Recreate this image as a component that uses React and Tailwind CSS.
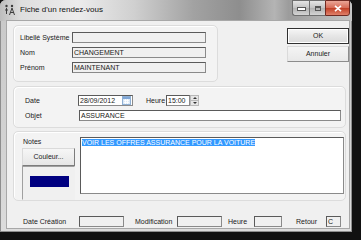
import React from "react";

function Field({ className, value, white }) {
  return (
    <div
      className={
        "h-[11px] border border-[#8a8a8a] border-t-[#5a5a5a] border-l-[#5a5a5a] px-[1px] text-[7px] leading-[9px] whitespace-nowrap overflow-hidden " +
        (white ? "bg-white " : "bg-[#f0f0f0] ") +
        className
      }
    >
      {value}
    </div>
  );
}

function Label({ className, children }) {
  return <div className={"shrink-0 text-[7px] leading-[9px] text-[#1a1a1a] " + className}>{children}</div>;
}

function CalendarIcon() {
  return (
    <svg width="9" height="9" viewBox="0 0 9 9">
      <rect x="0.5" y="0.5" width="8" height="8" fill="#dbe9f7" stroke="#8fb0d4" />
      <rect x="1" y="1" width="7" height="2" fill="#7fa6d6" />
      <path d="M2 4.5h5M2 6.5h5M3.5 3v5M5.5 3v5" stroke="#ffffff" strokeWidth="0.8" />
    </svg>
  );
}

function TitleIcon() {
  return (
    <svg width="12" height="12" viewBox="0 0 12 12">
      <circle cx="2.5" cy="2" r="1.2" fill="#3c3c3c" />
      <path d="M2.5 4v6M1 6h3" stroke="#3c3c3c" strokeWidth="1" />
      <circle cx="8" cy="2" r="1.2" fill="#3c3c3c" />
      <path d="M8 4l-2.5 7M8 4l2.5 7M6.3 8.5h3.4" stroke="#3c3c3c" strokeWidth="1" fill="none" />
    </svg>
  );
}

export default function App() {
  return (
    <div className="w-[361px] h-[240px] bg-[#111111] overflow-hidden font-['Liberation_Sans',Arial,sans-serif] text-[#1a1a1a]">
      {/* window */}
      <div className="w-[352px] h-[232px] flex flex-col rounded-t-[6px] bg-[linear-gradient(180deg,#c8c8c8,#d2d2d2_60%,#dcdcdc)] shadow-[inset_0_0_0_1px_#8e8e8e]">
        {/* title bar */}
        <div className="h-[21px] flex items-start rounded-t-[6px] bg-[linear-gradient(90deg,#bdbdbd_0%,#dedede_6%,#ececec_22%,#d0d0d0_38%,#a2a2a2_55%,#8e8e8e_68%,#b4b4b4_78%,#9c9c9c_82%,#c6c6c6_100%)]">
          <div className="ml-[4px] mt-[4px]">
            <TitleIcon />
          </div>
          <div className="ml-[4px] mt-[5px] text-[8px] leading-[10px] text-[#111]">Fiche d'un rendez-vous</div>
          <div className="ml-auto mr-[2px] flex h-[17px]">
            <div className="w-[17px] h-[16px] rounded-bl-[3px] border border-[#6f6f6f] border-r-0 bg-[linear-gradient(180deg,#e4e4e4,#c2c2c2_50%,#b0b0b0_51%,#d4d4d4)] flex items-end justify-center pb-[4px]">
              <div className="w-[7px] h-[2px] bg-white border border-[#555] box-content" />
            </div>
            <div className="w-[16px] h-[16px] border border-[#6f6f6f] border-r-0 bg-[linear-gradient(180deg,#e4e4e4,#c2c2c2_50%,#b0b0b0_51%,#d4d4d4)] flex items-center justify-center">
              <div className="w-[6px] h-[5px] border border-[#555] border-t-2 bg-transparent" />
            </div>
            <div className="w-[25px] h-[16px] rounded-br-[3px] border border-[#6f2a22] bg-[linear-gradient(180deg,#eaa596,#d66a55_50%,#c13f25_51%,#e0806a)] flex items-center justify-center">
              <svg width="8" height="7" viewBox="0 0 8 7">
                <path d="M1 0.8l6 5.4M7 0.8l-6 5.4" stroke="#ffffff" strokeWidth="1.6" />
              </svg>
            </div>
          </div>
        </div>

        {/* body with frame */}
        <div className="flex-1 flex pl-[7px] pr-[3px] pb-[4px]">
          <div className="flex-1 flex flex-col bg-[#f0f0f0] shadow-[0_0_0_1px_#a8a8a8]">
            {/* top section */}
            <div className="flex">
              <div className="ml-[6px] mt-[4px] w-[205px] h-[57px] rounded-[5px] border border-[#dcdcdc] bg-[#f3f3f3] shadow-[inset_1px_1px_0_#ffffff] pt-[6px] pl-[6px] flex flex-col gap-[4px]">
                <div className="flex items-center h-[11px]">
                  <Label className="w-[52px]">Libellé Système</Label>
                  <Field className="w-[134px]" value="" />
                </div>
                <div className="flex items-center h-[11px]">
                  <Label className="w-[52px]">Nom</Label>
                  <Field className="w-[134px]" value="CHANGEMENT" />
                </div>
                <div className="flex items-center h-[11px]">
                  <Label className="w-[52px]">Prénom</Label>
                  <Field className="w-[134px]" value="MAINTENANT" />
                </div>
              </div>
              <div className="ml-[69px] mt-[7px] w-[62px] flex flex-col gap-[2px]">
                <div className="h-[16px] border border-[#303030] bg-[linear-gradient(180deg,#f6f6f6,#e6e6e6_50%,#dadada)] shadow-[inset_0_0_0_1px_#ffffff] flex items-center justify-center text-[7px]">
                  OK
                </div>
                <div className="h-[16px] border border-[#dadada] border-r-[#8c8c8c] border-b-[#8c8c8c] bg-[linear-gradient(180deg,#f4f4f4,#e8e8e8)] flex items-center justify-center text-[7px]">
                  Annuler
                </div>
              </div>
            </div>

            {/* date / objet */}
            <div className="ml-[6px] mt-[4px] w-[333px] h-[42px] rounded-[5px] border border-[#dcdcdc] bg-[#f3f3f3] shadow-[inset_1px_1px_0_#ffffff] pt-[8px] pl-[11px] flex flex-col gap-[4px]">
              <div className="flex items-center h-[11px]">
                <Label className="w-[53px]">Date</Label>
                <div className="w-[55px] h-[11px] flex items-center border border-[#8a8a8a] border-t-[#5a5a5a] border-l-[#5a5a5a] bg-white pl-[1px] text-[7px] leading-[9px]">
                  <span className="flex-1">28/09/2012</span>
                  <div className="mr-[1px]">
                    <CalendarIcon />
                  </div>
                </div>
                <Label className="ml-[13px] w-[20px]">Heure</Label>
                <Field className="w-[24px]" white value="15:00" />
                <div className="w-[9px] h-[11px] flex flex-col">
                  <div className="flex-1 border border-[#b8b8b8] bg-[#e6e6e6] flex items-center justify-center">
                    <svg width="4" height="2" viewBox="0 0 4 2">
                      <path d="M0 2L2 0L4 2Z" fill="#333" />
                    </svg>
                  </div>
                  <div className="flex-1 border border-t-0 border-[#b8b8b8] bg-[#e6e6e6] flex items-center justify-center">
                    <svg width="4" height="2" viewBox="0 0 4 2">
                      <path d="M0 0L2 2L4 0Z" fill="#333" />
                    </svg>
                  </div>
                </div>
              </div>
              <div className="flex items-center h-[11px]">
                <Label className="w-[54px]">Objet</Label>
                <Field className="w-[262px]" white value="ASSURANCE" />
              </div>
            </div>

            {/* notes */}
            <div className="ml-[6px] mt-[3px] w-[333px] h-[70px] rounded-[5px] border border-[#dcdcdc] bg-[#f3f3f3] shadow-[inset_1px_1px_0_#ffffff] flex">
              <div className="ml-[8px] pt-[5px] w-[53px] flex flex-col">
                <Label className="h-[11px] pl-[1px]">Notes</Label>
                <div className="h-[18px] border border-[#dadada] border-r-[#7c7c7c] border-b-[#7c7c7c] bg-[linear-gradient(180deg,#f6f6f6,#e6e6e6)] flex items-center justify-center text-[7px]">
                  Couleur...
                </div>
                <div className="h-[34px] border border-[#f0f0f0] border-t-[#a0a0a0] border-l-[#a0a0a0] bg-[#f0f0f0] pt-[9px] pl-[7px]">
                  <div className="w-[39px] h-[11px] bg-[#000080]" />
                </div>
              </div>
              <div className="ml-[5px] mt-[5px] w-[264px] h-[57px] border border-[#8a8a8a] border-t-[#5a5a5a] border-l-[#5a5a5a] bg-white px-[1px] text-[7px] leading-[9px]">
                <span className="bg-[#3399ff] text-white">VOIR LES OFFRES ASSURANCE POUR LA VOITURE</span>
              </div>
            </div>

            {/* bottom row */}
            <div className="mt-[15px] ml-[16px] flex items-center h-[11px]">
              <Label className="w-[56px]">Date Création</Label>
              <Field className="w-[45px]" value="" />
              <Label className="ml-[11px] w-[42px]">Modification</Label>
              <Field className="w-[45px]" value="" />
              <Label className="ml-[6px] w-[26px]">Heure</Label>
              <Field className="w-[28px]" value="" />
              <Label className="ml-[14px] w-[30px]">Retour</Label>
              <Field className="w-[15px]" value="C" />
            </div>
          </div>
        </div>
      </div>
    </div>
  );
}
